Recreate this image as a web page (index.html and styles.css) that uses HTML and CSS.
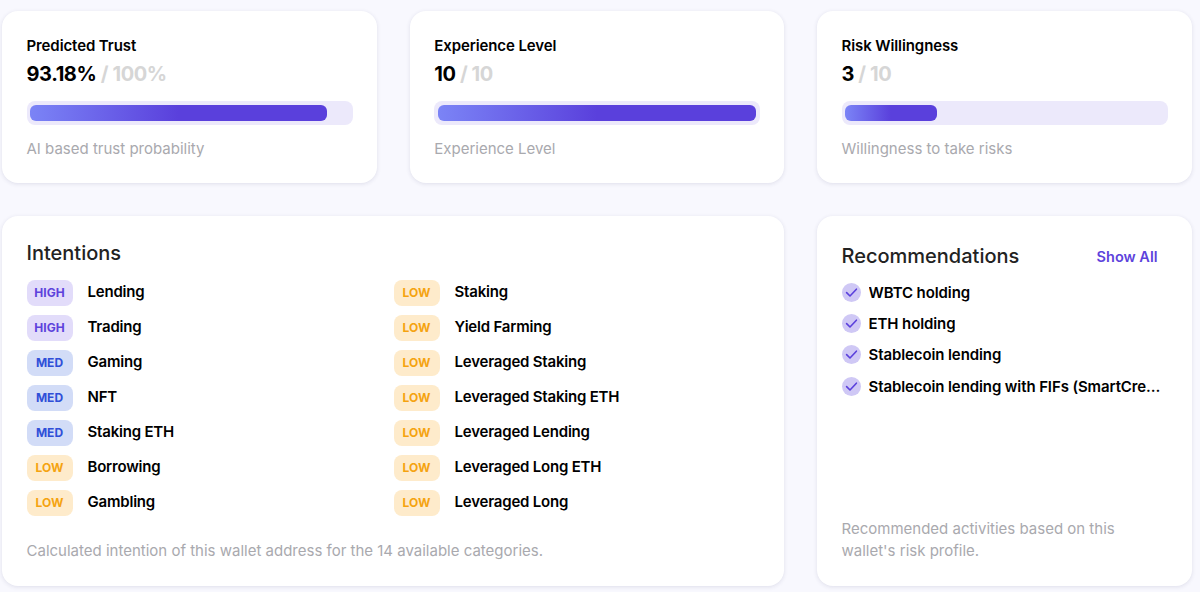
FILE: index.html
```html
<!DOCTYPE html>
<html lang="en">
<head>
<meta charset="utf-8">
<title>Wallet profile</title>
<link rel="stylesheet" href="styles.css">
</head>
<body>
<main class="grid">
  <section class="card stat">
    <h3 class="stat-title">Predicted Trust</h3>
    <p class="stat-value">93.18% <span class="stat-max">/ 100%</span></p>
    <div class="track"><div class="fill" style="width:93.18%"></div></div>
    <p class="note">AI based trust probability</p>
  </section>
  <section class="card stat">
    <h3 class="stat-title">Experience Level</h3>
    <p class="stat-value">10 <span class="stat-max">/ 10</span></p>
    <div class="track"><div class="fill" style="width:100%"></div></div>
    <p class="note">Experience Level</p>
  </section>
  <section class="card stat">
    <h3 class="stat-title">Risk Willingness</h3>
    <p class="stat-value">3 <span class="stat-max">/ 10</span></p>
    <div class="track"><div class="fill" style="width:28.8%"></div></div>
    <p class="note">Willingness to take risks</p>
  </section>

  <section class="card intentions">
    <h2 class="heading">Intentions</h2>
    <div class="columns">
      <ul class="list">
        <li class="row"><span class="tag high">HIGH</span><span class="label">Lending</span></li>
        <li class="row"><span class="tag high">HIGH</span><span class="label">Trading</span></li>
        <li class="row"><span class="tag med">MED</span><span class="label">Gaming</span></li>
        <li class="row"><span class="tag med">MED</span><span class="label">NFT</span></li>
        <li class="row"><span class="tag med">MED</span><span class="label">Staking ETH</span></li>
        <li class="row"><span class="tag low">LOW</span><span class="label">Borrowing</span></li>
        <li class="row"><span class="tag low">LOW</span><span class="label">Gambling</span></li>
      </ul>
      <ul class="list">
        <li class="row"><span class="tag low">LOW</span><span class="label">Staking</span></li>
        <li class="row"><span class="tag low">LOW</span><span class="label">Yield Farming</span></li>
        <li class="row"><span class="tag low">LOW</span><span class="label">Leveraged Staking</span></li>
        <li class="row"><span class="tag low">LOW</span><span class="label">Leveraged Staking ETH</span></li>
        <li class="row"><span class="tag low">LOW</span><span class="label">Leveraged Lending</span></li>
        <li class="row"><span class="tag low">LOW</span><span class="label">Leveraged Long ETH</span></li>
        <li class="row"><span class="tag low">LOW</span><span class="label">Leveraged Long</span></li>
      </ul>
    </div>
    <p class="note intent-note">Calculated intention of this wallet address for the 14 available categories.</p>
  </section>

  <section class="card recs">
    <div class="recs-head">
      <h2 class="heading">Recommendations</h2>
      <a class="show-all" href="#">Show All</a>
    </div>
    <ul class="rec-list">
      <li class="rec"><svg class="check" viewBox="0 0 19 19"><circle cx="9.5" cy="9.5" r="9.5" fill="#cfc8f5"/><path d="M4.6 9.6l3.4 3.4 6.4-6.8" fill="none" stroke="#5a40dc" stroke-width="1.6" stroke-linecap="round" stroke-linejoin="round"/></svg><span class="rec-text">WBTC holding</span></li>
      <li class="rec"><svg class="check" viewBox="0 0 19 19"><circle cx="9.5" cy="9.5" r="9.5" fill="#cfc8f5"/><path d="M4.6 9.6l3.4 3.4 6.4-6.8" fill="none" stroke="#5a40dc" stroke-width="1.6" stroke-linecap="round" stroke-linejoin="round"/></svg><span class="rec-text">ETH holding</span></li>
      <li class="rec"><svg class="check" viewBox="0 0 19 19"><circle cx="9.5" cy="9.5" r="9.5" fill="#cfc8f5"/><path d="M4.6 9.6l3.4 3.4 6.4-6.8" fill="none" stroke="#5a40dc" stroke-width="1.6" stroke-linecap="round" stroke-linejoin="round"/></svg><span class="rec-text">Stablecoin lending</span></li>
      <li class="rec"><svg class="check" viewBox="0 0 19 19"><circle cx="9.5" cy="9.5" r="9.5" fill="#cfc8f5"/><path d="M4.6 9.6l3.4 3.4 6.4-6.8" fill="none" stroke="#5a40dc" stroke-width="1.6" stroke-linecap="round" stroke-linejoin="round"/></svg><span class="rec-text">Stablecoin lending with FIFs (SmartCredit)</span></li>
    </ul>
    <p class="note recs-note">Recommended activities based on this wallet's risk profile.</p>
  </section>
</main>
</body>
</html>
```
FILE: styles.css
```css
* { box-sizing: border-box; }
html, body { margin: 0; height: 100%; }
body {
  background: #f8f8fe;
  color: #000;
  font-family: "Inter", "Noto Sans", "Liberation Sans", sans-serif;
  overflow: hidden;
}
h2, h3, p, ul { margin: 0; padding: 0; list-style: none; }

.grid {
  display: grid;
  grid-template-columns: 375px 374.5px 375px;
  grid-template-rows: 172px 370px;
  column-gap: 32.75px;
  row-gap: 33px;
  padding: 11px 0 0 2px;
}
.card {
  background: #fff;
  border-radius: 16px;
  box-shadow: 0 1px 4px rgba(40, 40, 90, 0.12);
  padding: 0 24.5px;
}
.stat { padding-top: 25px; }
.stat-title { font-size: 15px; line-height: 20px; font-weight: 600; letter-spacing: -0.1px; }
.stat-value { font-size: 20px; line-height: 24px; font-weight: 700; margin-top: 6px; letter-spacing: -0.4px; }
.stat-max { color: #d6d6d6; font-weight: 700; }
.track {
  height: 24px;
  margin-top: 15px;
  padding: 4px 3.5px;
  background: #ece9fb;
  border-radius: 8px;
}
.fill {
  height: 16px;
  border-radius: 6px;
  background: linear-gradient(90deg, #7b84f6 0, #5a40dc 50%);
}
.note { color: #a9a9ae; font-size: 15px; line-height: 22px; }
.stat .note { margin-top: 13px; }

.intentions { grid-column: 1 / span 2; padding-top: 25px; }
.heading { font-size: 20px; line-height: 24px; font-weight: 500; color: #222; }
.columns { display: grid; grid-template-columns: 367px 1fr; margin-top: 15px; }
.list { display: flex; flex-direction: column; gap: 9px; }
.row { display: flex; align-items: center; height: 26px; }
.tag {
  width: 46px;
  height: 26px;
  margin-right: 15px;
  padding-bottom: 1px;
  border-radius: 8px;
  font-size: 12px;
  font-weight: 700;
  display: flex;
  align-items: center;
  justify-content: center;
}
.high { background: #e2dcfa; color: #5d43dc; }
.med { background: #d2dcf7; color: #2f4fd8; }
.low { background: #feebcb; color: #f5a310; }
.label { font-size: 15px; font-weight: 600; letter-spacing: -0.2px; position: relative; top: -2px; }
.intent-note { margin-top: 24px; }

.recs { display: flex; flex-direction: column; padding-top: 28px; }
.recs-head { display: flex; justify-content: space-between; align-items: center; }
.show-all { color: #5d43dc; font-size: 14.5px; font-weight: 600; text-decoration: none; margin-right: 10px; }
.rec-list { display: flex; flex-direction: column; gap: 12.2px; margin-top: 15px; }
.rec { display: flex; align-items: center; gap: 8px; height: 19px; padding-right: 7px; }
.check { width: 19px; height: 19px; flex: none; }
.rec-text {
  font-size: 15px;
  font-weight: 600;
  letter-spacing: -0.1px;
  white-space: nowrap;
  overflow: hidden;
  text-overflow: ellipsis;
  min-width: 0;
}
.recs-note { margin-top: auto; margin-bottom: 24px; }
```
